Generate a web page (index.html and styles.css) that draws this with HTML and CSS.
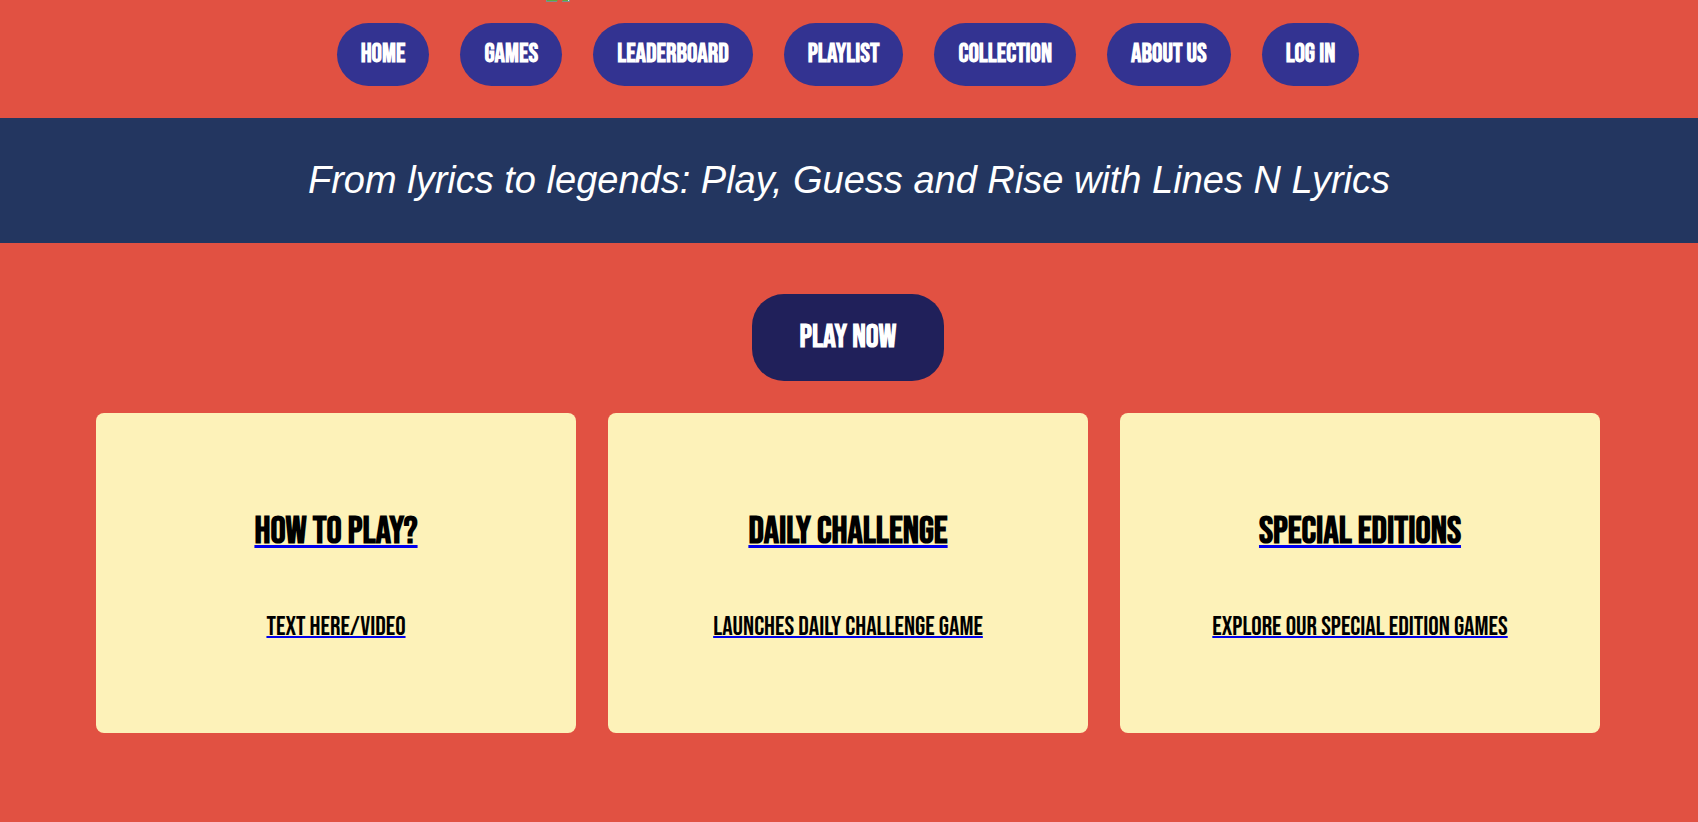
FILE: index.html
```html
<!DOCTYPE html>
<html lang="en">
<head>
<meta charset="utf-8">
<title>Lines N Lyrics</title>
<meta name="viewport" content="width=device-width, initial-scale=1">
<link rel="stylesheet" href="styles.css">
</head>
<body>
<header class="header">
  <svg class="logo" width="24" height="2" viewBox="0 0 24 2" aria-hidden="true">
    <path fill="#5eaa3c" d="M1 0h11l-1 1H1zM17 0h5v1h-6z"/>
    <path fill="#7d8c91" d="M0 0h1v1h10v1H0zM16 1h6V0h2v2h-8z"/>
    <path fill="#dfe6e8" d="M22 0h1v1h-1z"/>
  </svg>
  <nav class="nav">
    <a class="pill" href="#">HOME</a>
    <a class="pill" href="#">GAMES</a>
    <a class="pill" href="#">LEADERBOARD</a>
    <a class="pill" href="#">PLAYLIST</a>
    <a class="pill" href="#">COLLECTION</a>
    <a class="pill" href="#">ABOUT US</a>
    <a class="pill" href="#">LOG IN</a>
  </nav>
</header>
<section class="banner">
  <p class="tagline">From lyrics to legends: Play, Guess and Rise with Lines N Lyrics</p>
</section>
<main class="main">
  <button class="play" type="button">PLAY NOW</button>
  <div class="cards">
    <a class="card" href="#"><h2 class="card-title">HOW TO PLAY?</h2><p class="card-text">TEXT HERE/VIDEO</p></a>
    <a class="card" href="#"><h2 class="card-title">DAILY CHALLENGE</h2><p class="card-text">LAUNCHES DAILY CHALLENGE GAME</p></a>
    <a class="card" href="#"><h2 class="card-title">SPECIAL EDITIONS</h2><p class="card-text">EXPLORE OUR SPECIAL EDITION GAMES</p></a>
  </div>
</main>
</body>
</html>
```
FILE: styles.css
```css
* { box-sizing: border-box; }

body {
  margin: 0;
  background: #e15142;
  font-family: "Bebas Neue", "Roboto Condensed", "Liberation Sans", sans-serif;
}

.header { padding-bottom: 32px; }

.logo {
  display: block;
  margin-left: 546px;
}

.nav {
  display: flex;
  justify-content: center;
  gap: 31px;
  padding: 21px 2px 0 0;
}

.pill {
  padding: 16px 24px;
  border-radius: 32px;
  background: #333391;
  color: #fff;
  font-size: 26px;
  font-weight: 700;
  line-height: 31px;
  text-decoration: none;
}

.banner {
  padding: 32px;
  background: #233660;
}

.tagline {
  margin: 0;
  color: #fff;
  font-family: "Liberation Sans", Helvetica, Arial, sans-serif;
  font-size: 38px;
  font-style: italic;
  line-height: 61px;
  text-align: center;
}

.main {
  display: flex;
  flex-direction: column;
  align-items: center;
  gap: 32px;
  padding: 51px 98px 80px 96px;
}

.play {
  padding: 24px 48px;
  border: 0;
  border-radius: 32px;
  background: #20205a;
  color: #fff;
  font-family: inherit;
  font-size: 32px;
  font-weight: 700;
  line-height: 39px;
}

.cards {
  display: grid;
  grid-template-columns: repeat(3, 1fr);
  gap: 32px;
  width: 100%;
}

.card {
  display: flex;
  flex-direction: column;
  align-items: center;
  justify-content: center;
  gap: 56px;
  min-height: 320px;
  padding: 22px 16px 16px;
  border-radius: 8px;
  background: #fdf2b9;
  color: #000;
  text-decoration: none;
}

.card-title,
.card-text {
  margin: 0;
  text-decoration: underline #0000ee;
  text-decoration-skip-ink: none;
}

.card-title {
  font-size: 38px;
  line-height: 48px;
  text-decoration-thickness: 3px;
}

.card-text {
  font-size: 26px;
  line-height: 32px;
  text-decoration-thickness: 2px;
}
```
